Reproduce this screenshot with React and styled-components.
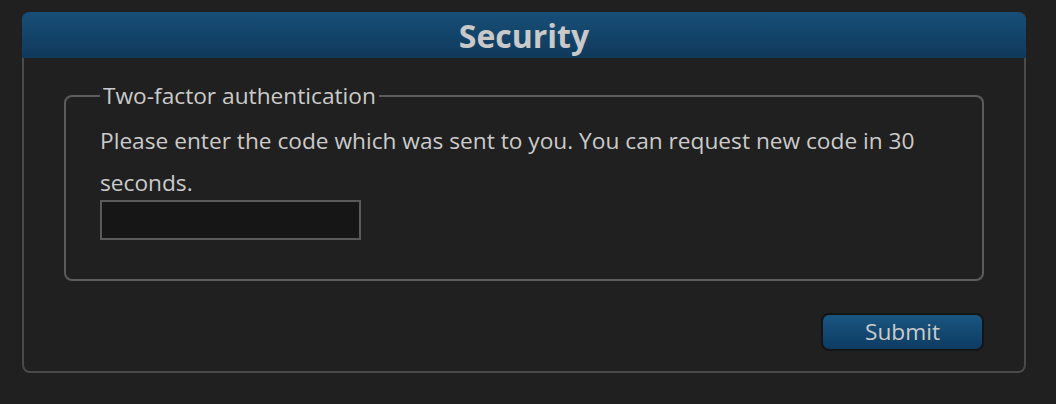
import React from 'react'
import styled, { createGlobalStyle } from 'styled-components'

const GlobalStyle = createGlobalStyle`
  html, body {
    margin: 0;
    background: #202020;
    font-family: "Open Sans", "Noto Sans", sans-serif;
    color: #cbcbcb;
  }
`

const Page = styled.div`
  padding: 12px 30px 0 22px;
`

const Panel = styled.section`
  height: 361px;
  box-sizing: border-box;
  border: 2px solid #4a4a4a;
  border-top: none;
  border-radius: 8px;
  display: flex;
  flex-direction: column;
`

const Header = styled.h2`
  margin: 0 -2px;
  height: 46px;
  border-radius: 8px 8px 0 0;
  background: linear-gradient(#174f78, #10395b);
  display: flex;
  align-items: center;
  justify-content: center;
  font-size: 32px;
  font-weight: 700;
  color: #c9c9c9;
`

const Body = styled.div`
  padding: 22px 40px 0 40px;
  display: flex;
  flex-direction: column;
`

const Group = styled.fieldset`
  margin: 0;
  padding: 0 34px 0 34px;
  border: 2px solid #5c5c5c;
  border-radius: 8px;
  height: 201px;
  box-sizing: border-box;

  legend {
    padding: 0 3px;
    margin-left: 0;
    font-size: 22.7px;
    line-height: 31px;
    color: #cbcbcb;
  }
`

const Message = styled.p`
  margin: 0;
  font-size: 22.7px;
  line-height: 42px;
  margin-top: 9px;
`

const CodeInput = styled.input`
  display: block;
  width: 261px;
  height: 40px;
  box-sizing: border-box;
  background: #161616;
  border: 2px solid #5a5a5a;
  color: #cbcbcb;
  outline: none;
  margin-top: -4px;
`

const Actions = styled.div`
  display: flex;
  justify-content: flex-end;
  padding-top: 32px;
`

const SubmitButton = styled.button`
  width: 163px;
  height: 38px;
  border: 2px solid #141414;
  border-radius: 8px;
  background: linear-gradient(#1a5682, #0d3b61);
  color: #cbcbcb;
  font-family: inherit;
  font-size: 22.7px;
  line-height: 1;
  cursor: pointer;
`

const App = () => (
  <Page>
    <GlobalStyle />
    <Panel>
      <Header>Security</Header>
      <Body>
        <Group>
          <legend>Two-factor authentication</legend>
          <Message>
            Please enter the code which was sent to you. You can request new code in 30 seconds.
          </Message>
          <CodeInput type="text" />
        </Group>
        <Actions>
          <SubmitButton type="submit">Submit</SubmitButton>
        </Actions>
      </Body>
    </Panel>
  </Page>
)

export default App
